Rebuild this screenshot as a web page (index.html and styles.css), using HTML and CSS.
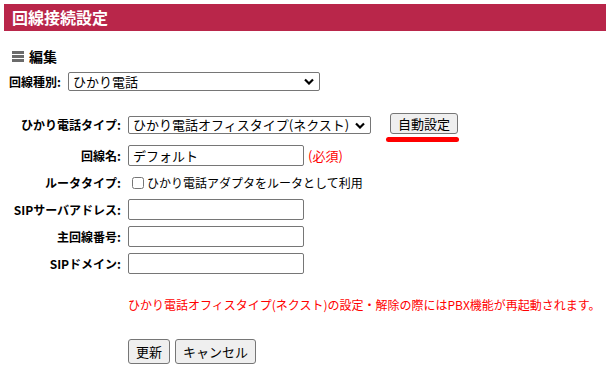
FILE: index.html
```html
<!DOCTYPE html>
<html lang="ja">
<head>
  <meta charset="UTF-8" />
  <title>回線接続設定</title>
  <link rel="stylesheet" href="styles.css">
</head>
<body>
  <header class="titulo">回線接続設定</header>

  <h2 class="seccion"><span class="icono"><i></i><i></i><i></i></span>編集</h2>

  <div class="tipo">
    <label for="tipo">回線種別:</label>
    <select id="tipo">
      <option>ひかり電話</option>
    </select>
  </div>

  <form class="formulario">
    <label class="etq" for="tel">ひかり電話タイプ:</label>
    <div class="campo">
      <select id="tel" class="sel-tel">
        <option>ひかり電話オフィスタイプ(ネクスト)</option>
      </select>
      <span class="marca"><button type="button" class="btn">自動設定</button></span>
    </div>

    <label class="etq" for="nombre">回線名:</label>
    <div class="campo">
      <input type="text" id="nombre" value="デフォルト" />
      <span class="req">(必須)</span>
    </div>

    <label class="etq">ルータタイプ:</label>
    <div class="campo">
      <label class="chk"><input type="checkbox" />ひかり電話アダプタをルータとして利用</label>
    </div>

    <label class="etq" for="sip">SIPサーバアドレス:</label>
    <div class="campo"><input type="text" id="sip" /></div>

    <label class="etq" for="num">主回線番号:</label>
    <div class="campo"><input type="text" id="num" /></div>

    <label class="etq" for="dom">SIPドメイン:</label>
    <div class="campo"><input type="text" id="dom" /></div>
  </form>

  <p class="aviso">ひかり電話オフィスタイプ(ネクスト)の設定・解除の際にはPBX機能が再起動されます。</p>

  <div class="acciones">
    <button type="button" class="btn">更新</button>
    <button type="button" class="btn">キャンセル</button>
  </div>
</body>
</html>
```
FILE: styles.css
```css
body {
  font-family: "Noto Sans CJK JP", "Noto Sans", sans-serif;
  font-size: 12px;
  color: #000;
  background: #fff;
  margin: 0;
  padding: 4px 0 0 4px;
}
.titulo {
  background-color: #b9264a;
  color: #fff;
  font-weight: bold;
  font-size: 16px;
  height: 27px;
  line-height: 27px;
  padding-left: 8px;
}
.seccion {
  display: flex;
  align-items: center;
  margin: 15px 0 0 8px;
  height: 20px;
  font-size: 14px;
  font-weight: bold;
}
.icono {
  display: flex;
  flex-direction: column;
  gap: 1px;
  width: 12px;
  margin-right: 5px;
}
.icono i {
  display: block;
  height: 3px;
  background: #6b6b6b;
}
.tipo {
  display: flex;
  align-items: center;
  margin: 6px 0 0 5px;
  height: 19px;
}
.tipo label {
  font-weight: bold;
  margin-right: 7px;
}
.tipo select {
  width: 252px;
  height: 19px;
}
select, input[type="text"], .btn {
  font-family: inherit;
  font-size: 13px;
  box-sizing: border-box;
  border: 1px solid #767676;
  border-radius: 2px;
  background-color: #fff;
  color: #000;
  padding: 0 2px;
}
select {
  appearance: none;
  -webkit-appearance: none;
  line-height: 16px;
  padding: 0 18px 0 4px;
  background-image: url("data:image/svg+xml,%3Csvg xmlns='http://www.w3.org/2000/svg' width='10' height='7' viewBox='0 0 10 7'%3E%3Cpath d='M1 1.5l4 4 4-4' fill='none' stroke='%23000' stroke-width='2.2'/%3E%3C/svg%3E");
  background-repeat: no-repeat;
  background-position: right 5px center;
}
.formulario {
  display: grid;
  grid-template-columns: 117px auto;
  grid-template-rows: 26px repeat(5, 21px);
  column-gap: 7px;
  row-gap: 6px;
  margin-top: 22px;
}
.etq {
  font-weight: bold;
  text-align: right;
  align-self: center;
}
.etq:first-child {
  align-self: start;
  margin-top: 3px;
}
.campo {
  display: flex;
  align-items: center;
}
.formulario .campo:nth-child(2) {
  align-items: flex-start;
}
.sel-tel {
  width: 243px;
  height: 18px;
  margin-top: 3px;
}
.marca {
  position: relative;
  margin-left: 19px;
}
.marca::after {
  content: "";
  position: absolute;
  left: -4px;
  right: -1px;
  top: 24px;
  height: 5px;
  border-radius: 3px;
  background: #ff0000;
}
.btn {
  background: #efefef;
  border-radius: 3px;
  height: 21px;
  padding: 0 7px;
  line-height: 19px;
}
input[type="text"] {
  width: 176px;
  height: 21px;
  padding: 0 4px;
}
.req {
  color: #ff0000;
  font-size: 13px;
  margin-left: 4px;
}
.chk {
  display: flex;
  align-items: center;
}
.chk input {
  width: 12px;
  height: 12px;
  margin: 0 3px 0 4px;
}
.aviso {
  color: #ff0000;
  font-size: 12px;
  white-space: nowrap;
  margin: 22px 0 0 124px;
  line-height: 18px;
}
.acciones {
  display: flex;
  gap: 5px;
  margin: 25px 0 0 124px;
}
.acciones .btn {
  height: 25px;
  padding: 0 7px;
}
```
